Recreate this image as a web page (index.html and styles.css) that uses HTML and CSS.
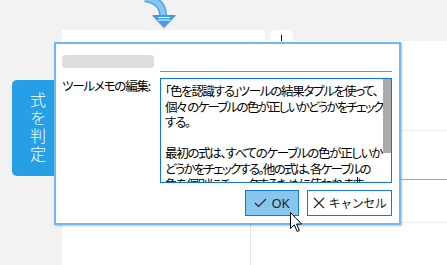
FILE: index.html
```html
<!DOCTYPE html>
<html lang="ja">
<head>
    <meta charset="UTF-8">
    <meta name="viewport" content="width=device-width, initial-scale=1.0">
    <title>ツールメモの編集</title>
    <link rel="stylesheet" href="styles.css">
</head>
<body>
    <div class="stage">
        <div class="canvas">
            <div class="tabs-row">
                <div class="sheet-head"></div>
                <div class="plus-tab">
                    <svg width="23" height="14" viewBox="0 0 23 14">
                        <path d="M11.5 5 V14 M5 11.5 H18" stroke="#111" stroke-width="1"/>
                    </svg>
                </div>
            </div>
            <div class="board">
                <div class="gutter"></div>
                <div class="sheet"></div>
                <div class="rest">
                    <div class="grid-lines">
                        <div class="gl gl-1"></div>
                        <div class="gl gl-2"></div>
                        <div class="gl gl-3"></div>
                    </div>
                </div>
            </div>
        </div>

        <!-- connector arrow coming into the node -->
        <svg class="flow-arrow" width="44" height="32" viewBox="0 0 44 32">
            <path d="M5 -2 Q23 1 23 15" fill="none" stroke="#4fa6e4" stroke-width="8"/>
            <path d="M5 -2 Q23 1 23 15" fill="none" stroke="#86c6f2" stroke-width="5"/>
            <polygon points="12,16 36,16 24,29" fill="#bdbdbd"/>
            <polygon points="12,15 36,15 24,27.5" fill="#3b9fe2"/>
            <path d="M18 17.5 H30 M18 20 H30" stroke="#fff" stroke-width="1"/>
        </svg>

        <div class="side-tab"><span>式を判定</span></div>

        <div class="dialog">
            <div class="dlg-head">
                <div class="title-ph"></div>
                <div class="title-field"></div>
            </div>
            <div class="dlg-body">
                <div class="memo-label">ツールメモの編集:</div>
                <div class="memo">
                    <div class="memo-line">「色を認識する」ツールの結果タプルを使って、</div>
                    <div class="memo-line tight">個々 のケーブルの色が正しいかどうかをチェック</div>
                    <div class="memo-line">する。</div>
                    <div class="memo-line">&nbsp;</div>
                    <div class="memo-line">最初の式は、すべてのケーブルの色が正しいか</div>
                    <div class="memo-line tight">どうかをチェックする。他の式は、各ケーブルの</div>
                    <div class="memo-line">色を個別にチェックするために使われます。</div>
                    <div class="caret"></div>
                    <div class="scroll-thumb"></div>
                </div>
            </div>
            <div class="dlg-buttons">
                <button class="btn btn-ok">
                    <svg width="13" height="10" viewBox="0 0 13 10"><path d="M1 5 L4.5 8.5 L12 1" fill="none" stroke="#222" stroke-width="1.1"/></svg>
                    OK
                </button>
                <button class="btn btn-cancel">
                    <svg width="12" height="12" viewBox="0 0 12 12"><path d="M1 1 L11 11 M11 1 L1 11" stroke="#222" stroke-width="1.1"/></svg>
                    キャンセル
                </button>
            </div>
        </div>

        <svg class="cursor" width="14" height="22" viewBox="0 0 14 22">
            <path d="M1.5 1.5 V17.5 L5.3 13.8 L8.2 20.5 L10.4 19.5 L7.6 13 H12.6 Z" fill="#fff" stroke="#000" stroke-width="1" stroke-linejoin="miter"/>
        </svg>
    </div>
</body>
</html>
```

FILE: styles.css
```css
body { margin: 0; background: #f2f2f2; font-family: "Noto Sans", "Noto Sans CJK JP", sans-serif; }
.stage { position: relative; width: 447px; height: 265px; overflow: hidden; }

/* workspace behind the dialog */
.canvas { display: flex; flex-direction: column; height: 100%; padding-top: 30px; box-sizing: border-box; }
.tabs-row { display: flex; height: 11px; margin-left: 62px; }
.sheet-head { width: 203px; background: #fff; margin-right: 5px; }
.plus-tab { width: 23px; height: 11px; background: #fff; border-radius: 6px 6px 0 0; overflow: visible; }
.plus-tab svg { display: block; overflow: visible; }
.board { flex: 1; display: flex; }
.gutter { width: 62px; }
.sheet { width: 188px; background: #fff; border-right: 1px solid #e6e6e6; }
.rest { flex: 1; background: #fff; }
.grid-lines { margin-left: 149px; }
.gl { height: 1px; background: #ececec; }
.gl-1 { margin-top: 89px; }
.gl-2 { margin-top: 48px; background: #a9a9a9; }
.gl-3 { margin-top: 42px; }

.flow-arrow { position: absolute; left: 140px; top: 0; }

.side-tab { position: absolute; left: 12px; top: 80px; width: 50px; height: 96px; background: #279fe6; border-radius: 5px 0 0 5px; display: flex; align-items: center; justify-content: center; }
.side-tab span { writing-mode: vertical-rl; text-orientation: upright; color: #fff; font-size: 16px; letter-spacing: 2px; font-weight: 300; }

/* dialog */
.dialog { position: absolute; left: 54px; top: 42px; width: 347px; height: 183px; box-sizing: border-box; border: 2px solid #72b6f3; background: #fff; box-shadow: 1px 1px 2px rgba(0, 0, 0, 0.25); padding: 11px 7px 0 6px; display: flex; flex-direction: column; }
.dlg-head { display: flex; height: 17px; }
.title-ph { width: 92px; height: 13px; background: #dedede; border-radius: 3px; }
.title-field { flex: 1; margin-left: 6px; height: 16px; border-bottom: 1px solid #8a8a8a; }
.dlg-body { display: flex; margin-top: 6px; }
.memo-label { width: 98px; padding-top: 1px; font-size: 12.5px; line-height: 15px; color: #000; letter-spacing: -1.2px; font-feature-settings: "palt"; }
.memo { position: relative; width: 232px; height: 105px; box-sizing: border-box; border: 1px solid #0b78d3; padding: 5px 0 0 4px; overflow: hidden; }
.memo-line { white-space: pre; font-size: 12.5px; line-height: 15.5px; color: #000; letter-spacing: -1.3px; font-feature-settings: "palt"; }
.memo-line.tight { letter-spacing: -1.75px; }
.caret { position: absolute; left: 196px; top: 98px; width: 1px; height: 10px; background: #111; }
.scroll-thumb { position: absolute; right: 0; top: 0; width: 8px; height: 74px; background: #ababab; }

.dlg-buttons { display: flex; justify-content: flex-end; gap: 8px; margin-top: 7px; }
.btn { height: 26px; border: 1px solid #1679d0; background: #fff; font-family: inherit; font-size: 13px; color: #222; display: flex; align-items: center; justify-content: center; gap: 4px; padding: 0; }
.btn-ok { width: 54px; background: #87c6ef; }
.btn-cancel { width: 85px; font-size: 12px; letter-spacing: -0.5px; }

.cursor { position: absolute; left: 289px; top: 211px; }
```
